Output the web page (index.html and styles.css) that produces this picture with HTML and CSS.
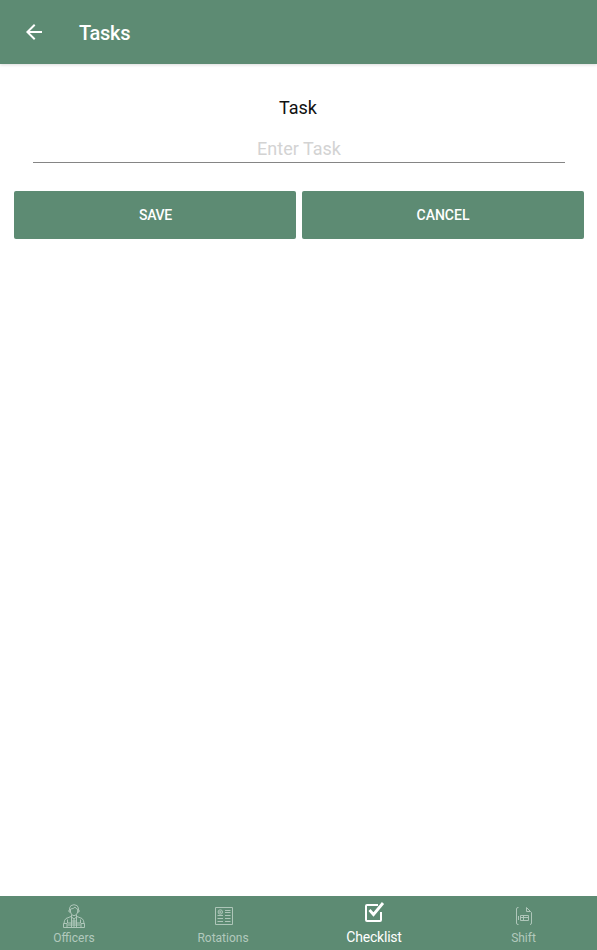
FILE: index.html
```html
<!DOCTYPE html>
<html lang="en">
<head>
<meta charset="utf-8">
<title>Tasks</title>
<link rel="stylesheet" href="styles.css">
</head>
<body>
<header class="appbar">
  <svg class="back" width="24" height="24" viewBox="0 0 24 24" fill="#fff"><path d="M20 11H7.83l5.59-5.59L12 4l-8 8 8 8 1.41-1.41L7.83 13H20v-2z"/></svg>
  <h1 class="title">Tasks</h1>
</header>
<main class="content">
  <label class="label" for="task">Task</label>
  <input class="field" id="task" type="text" placeholder="Enter Task">
  <div class="actions">
    <button class="btn save">SAVE</button>
    <button class="btn">CANCEL</button>
  </div>
</main>
<nav class="tabs">
  <a class="tab">
    <svg class="icon" width="24" height="24" viewBox="0 0 24 24">
      <path d="M7.500 6.500V4.200Q8 .8 12 .7q4 .1 4.500 3.500v2.300M8.500 5q3 0 4.500-2 1 2 2.700 2v3q-.7 3.500-3.700 3.700Q9 11.500 8.500 8zM7 6v2h1.500M17 6v2h-1.500M9.500 11v2L12 15l2.500-2v-2M9 12.500l-5 2Q2 16 2 19.500M15 12.500l5 2q2 1.500 2 5M1.500 19.500H5v4H1.500zM19 19.500h3.500v4H19zM5 23.500h14M5.500 15.500v3.500h13v-3.500M9.500 13v10M14.500 13v10M12 15v8M5.500 21h13M9.500 17h5"/>
    </svg>
    <span class="name">Officers</span>
  </a>
  <a class="tab rotations">
    <svg class="icon" width="24" height="24" viewBox="0 0 24 24">
      <path d="M3.500 3.500h17v17h-17zM13 6.500h5.500M13 8.500h5.500M13 11.500h5.500M5.500 14.500H11M13 14.500h5.500M5.500 17.500H11M13 17.500h5.500M5.500 11.500H11"/>
      <circle cx="8.300" cy="8" r="2.200"/><circle cx="8.300" cy="8" r=".7"/>
    </svg>
    <span class="name">Rotations</span>
  </a>
  <a class="tab active">
    <svg class="icon" width="24" height="24" viewBox="0 0 24 24">
      <path d="M16 5H5Q4 5 4 6v14q0 1 1 1h13q1 0 1-1v-8"/><path class="tick" d="M7.500 10l4 4.500L21 3"/>
    </svg>
    <span class="name">Checklist</span>
  </a>
  <a class="tab last">
    <svg class="icon" width="24" height="24" viewBox="0 0 24 24">
      <path d="M6.500 3.500H6Q4.500 3.500 4.500 5v14q0 1.500 1.500 1.500h.5M14.500 3.500v4h4zM18.500 7.500l1 1V19q0 1.500-1.500 1.500M8.500 11.500h8v5h-8zM8.500 13.500h8M11.500 11.500v5M6.500 12v4"/>
    </svg>
    <span class="name">Shift</span>
  </a>
</nav>
</body>
</html>
```

FILE: styles.css
```css
* { box-sizing: border-box; }
body {
  margin: 0;
  height: 100vh;
  display: flex;
  flex-direction: column;
  overflow: hidden;
  background: #fff;
  font-family: Roboto, sans-serif;
}
.appbar {
  height: 64px;
  flex: none;
  display: flex;
  align-items: center;
  gap: 33px;
  padding-left: 22px;
  background: #5d8b73;
  color: #fff;
  box-shadow: 0 1px 3px rgba(0, 0, 0, .14);
}
.title {
  margin: 2px 0 0;
  font-size: 20px;
  line-height: 24px;
  font-weight: 500;
  letter-spacing: -.3px;
}
.content {
  flex: 1;
  display: flex;
  flex-direction: column;
  padding: 33px 13px 0 14px;
}
.label {
  padding-right: 2px;
  font-size: 18px;
  line-height: 22px;
  text-align: center;
  color: #111;
}
.field {
  height: 30px;
  margin: 14px 19px 0;
  padding: 2px 0 0;
  border: 0;
  border-bottom: 1px solid #858585;
  outline: 0;
  background: none;
  font: 18px/24px Roboto, sans-serif;
  text-align: center;
}
.field::placeholder { color: #d3d3d3; opacity: 1; }
.actions {
  display: grid;
  grid-template-columns: 1fr 1fr;
  gap: 6px;
  margin-top: 28px;
}
.btn {
  height: 48px;
  padding: 0;
  border: 0;
  border-radius: 2px;
  background: #5d8b73;
  color: #fff;
  font: 500 14px/16px Roboto, sans-serif;
}
.save {
  padding-left: 1px;
  letter-spacing: -.3px;
}
.tabs {
  height: 54px;
  flex: none;
  display: grid;
  grid-template-columns: 148px 150px 152px 1fr;
  background: #5d8b73;
}
.tab {
  display: flex;
  flex-direction: column;
  align-items: center;
  padding-top: 8px;
  color: #b2c9bd;
  font-size: 12px;
}
.icon {
  flex: none;
  fill: none;
  stroke: currentColor;
  stroke-width: .95;
}
.rotations .icon { margin-left: 2px; }
.last .icon { margin-left: 1px; }
.name { margin-top: 3px; line-height: 14px; }
.active {
  padding-top: 4px;
  color: #fff;
  font-size: 14px;
}
.active .icon { stroke-width: 2; }
.active .tick { stroke-width: 2.800; }
.active .name {
  margin-top: 5px;
  line-height: 16px;
  letter-spacing: -.2px;
}
```
